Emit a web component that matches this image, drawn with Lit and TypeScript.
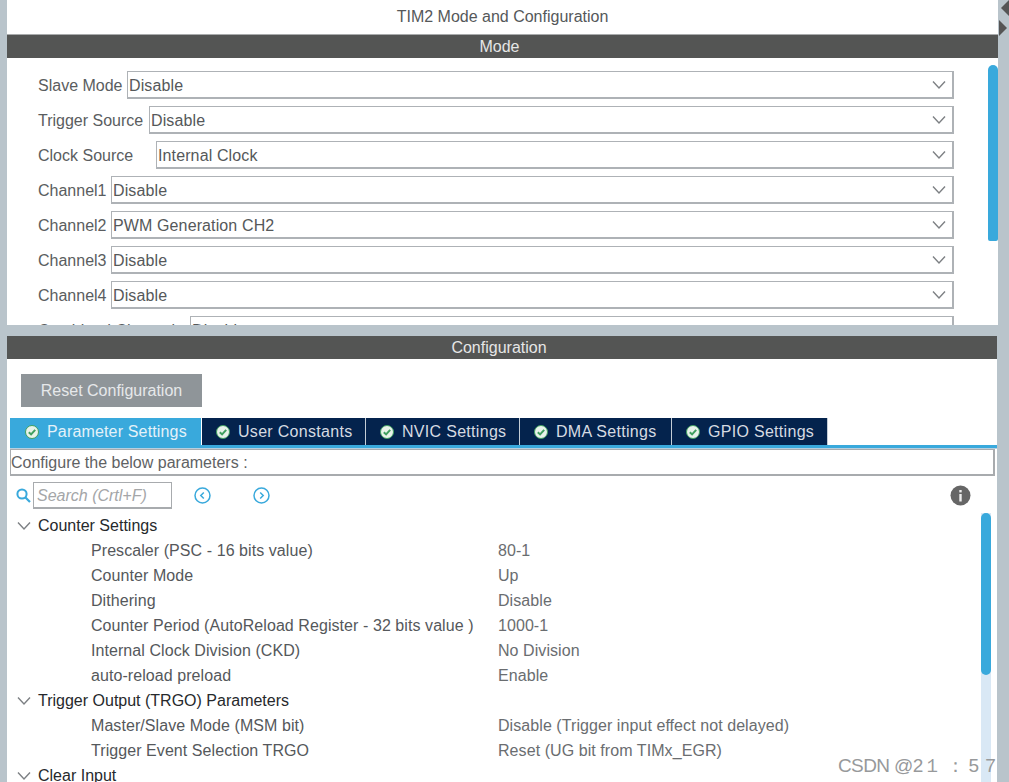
import { LitElement, html, css, svg } from "lit";
import { customElement } from "lit/decorators.js";

const modes = [
  ["Slave Mode", "Disable", 89],
  ["Trigger Source", "Disable", 111],
  ["Clock Source", "Internal Clock", 118],
  ["Channel1", "Disable", 73],
  ["Channel2", "PWM Generation CH2", 73],
  ["Channel3", "Disable", 73],
  ["Channel4", "Disable", 73],
  ["Combined Channels", "Disable", 152],
] as const;
const tabs = [
  ["Parameter Settings", 192],
  ["User Constants", 164],
  ["NVIC Settings", 154],
  ["DMA Settings", 152],
  ["GPIO Settings", 156],
] as const;
type Row = { h?: string; k?: string; v?: string };
const rows: Row[] = [
  { h: "Counter Settings" },
  { k: "Prescaler (PSC - 16 bits value)", v: "80-1" },
  { k: "Counter Mode", v: "Up" },
  { k: "Dithering", v: "Disable" },
  { k: "Counter Period (AutoReload Register - 32 bits value )", v: "1000-1" },
  { k: "Internal Clock Division (CKD)", v: "No Division" },
  { k: "auto-reload preload", v: "Enable" },
  { h: "Trigger Output (TRGO) Parameters" },
  { k: "Master/Slave Mode (MSM bit)", v: "Disable (Trigger input effect not delayed)" },
  { k: "Trigger Event Selection TRGO", v: "Reset (UG bit from TIMx_EGR)" },
  { h: "Clear Input" },
];
const chevron = svg`<path d="M1 1.5 L7 8 L13 1.5" fill="none" stroke="#7d8084" stroke-width="1.4"/>`;
const check = html`<svg class="check" width="14" height="14" viewBox="0 0 14 14">
  <circle cx="7" cy="7" r="6.5" fill="#e8f3ea" stroke="#3f9f5f" stroke-width="1"/>
  <path d="M3.8 7.2 L6.1 9.4 L10.2 4.9" fill="none" stroke="#3f9f5f" stroke-width="2"/>
</svg>`;

@customElement("app-root")
export class AppRoot extends LitElement {
  static styles = css`
    :host {
      display: flex;
      width: 1009px;
      height: 782px;
      overflow: hidden;
      position: relative;
      background: #b9c4cb;
      font-family: "Liberation Sans", Arial, sans-serif;
      font-size: 16px;
      color: #5a5d60;
    }
    .main { width: 991px; margin-left: 7px; display: flex; flex-direction: column; }
    .gutter { flex: 1; display: flex; flex-direction: column; gap: 4px; padding-left: 1px; }
    .gutter svg { display: block; }
    .top { height: 325px; background: #fff; display: flex; flex-direction: column; }
    .title { height: 34px; line-height: 33px; text-align: center; color: #55585a; }
    .bar {
      height: 23px; line-height: 23px; text-align: center; background: #545554;
      color: #e6e6e6; flex: none; padding-right: 6px;
    }
    .top .bar { border-top: 1px solid #a9abac; }
    .modebody { flex: 1; min-height: 0; display: flex; overflow: hidden; }
    .modelist {
      flex: 1; padding: 13px 0 0 31px; display: flex; flex-direction: column; gap: 7px;
      align-items: stretch; margin-right: 34px;
    }
    .mrow { display: flex; flex: none; height: 28px; align-items: center; }
    .mlabel { flex: none; white-space: nowrap; padding-top: 1px; }
    .select {
      flex: 1; height: 28px; box-sizing: border-box; border: 2px solid #aeb2b6; border-top-width: 1px;
      border-left-width: 1px; display: flex; align-items: center; justify-content: space-between;
      padding: 2px 6px 0 1px; color: #55585a; letter-spacing: .12px;
    }
    .select svg { display: block; margin-top: -2px; }
    .vscroll { width: 10px; flex: none; }
    .thumb { background: #39a9dc; width: 10px; border-radius: 5px 5px 2px 2px; }
    .vscroll .thumb { margin-top: 7px; height: 176px; }
    .bottom { flex: 1; min-height: 0; margin-top: 11px; margin-right: 1px; background: #fff; display: flex; flex-direction: column; overflow: hidden; }
    .resetwrap { padding: 15px 0 11px 14px; }
    .reset {
      width: 181px; height: 33px; box-sizing: border-box; background: #8f9599; color: #e6e8ea;
      display: flex; align-items: center; justify-content: center;
    }
    .tabs { display: flex; margin-left: 3px; height: 27px; border-bottom: 3px solid #39a9dc; box-shadow: 0 1px 0 #b6cfdf; }
    .tab {
      flex: none; background: #04234d; color: #d6dbe2; border-right: 1px solid #c4cdd6;
      box-sizing: border-box; display: flex; align-items: center; gap: 8px; padding-left: 14px;
      letter-spacing: .3px; white-space: nowrap;
    }
    .tab.active { background: #39a9dc; color: #e4f2f9; letter-spacing: .16px; padding-left: 15px; border-right-color: #fff; }
    .confbox {
      margin: 1px 2px 0 3px; height: 27px; box-sizing: border-box; border: 2px solid #a8abae;
      border-top-width: 1px; border-left-width: 1px; line-height: 26px; color: #5f6264;
    }
    .toolbar { height: 37px; display: flex; align-items: center; padding: 1px 0 0 9px; box-sizing: border-box; }
    .search {
      width: 139px; height: 27px; box-sizing: border-box; border: 1px solid #a8abae; border-bottom-width: 2px;
      margin-left: 2px; font-style: italic; color: #a4a6a8; line-height: 26px; padding-left: 3px;
    }
    .nav1 { margin-left: 22px; }
    .nav2 { margin-left: 42px; }
    .info { margin-left: auto; margin-right: 26px; }
    .treewrap { flex: 1; min-height: 0; display: flex; }
    .tree { flex: 1; overflow: hidden; }
    .trow { height: 25px; display: grid; grid-template-columns: 84px 407px 1fr; align-items: center; white-space: nowrap; }
    .head { grid-column: 1 / 4; display: flex; align-items: center; gap: 7px; padding-left: 10px; color: #26292c; }
    .key { grid-column: 2; color: #55585b; letter-spacing: .07px; }
    .val { grid-column: 3; color: #6a6d70; letter-spacing: .07px; }
    .track { width: 10px; flex: none; background: #d9e8f5; margin-right: 6px; }
    .track .thumb { height: 162px; border-radius: 5px; }
    .mark {
      position: absolute; left: 838px; top: 753px; font-size: 19px; color: #97999b;
      white-space: nowrap; letter-spacing: -.6px;
    }
    .mark .colon { margin-left: 5px; margin-right: 4px; }
    .mark .last { margin-left: 2px; }
  `;

  render() {
    return html`
      <div class="main">
        <div class="top">
          <div class="title">TIM2 Mode and Configuration</div>
          <div class="bar">Mode</div>
          <div class="modebody">
            <div class="modelist">
              ${modes.map(
                ([l, v, w]) => html`<div class="mrow">
                  <div class="mlabel" style="width:${w}px">${l}</div>
                  <div class="select">
                    <span>${v}</span>
                    <svg width="14" height="10" viewBox="0 0 14 10">${chevron}</svg>
                  </div>
                </div>`
              )}
            </div>
            <div class="vscroll"><div class="thumb"></div></div>
          </div>
        </div>
        <div class="bottom">
          <div class="bar">Configuration</div>
          <div class="resetwrap"><div class="reset">Reset Configuration</div></div>
          <div class="tabs">
            ${tabs.map(
              ([t, w], i) => html`<div class="tab ${i === 0 ? "active" : ""}" style="width:${w}px">${check}<span>${t}</span></div>`
            )}
          </div>
          <div class="confbox">Configure the below parameters :</div>
          <div class="toolbar">
            <svg width="15" height="15" viewBox="0 0 15 15">
              <circle cx="6" cy="6" r="4.6" fill="none" stroke="#39a9dc" stroke-width="2"/>
              <path d="M9.5 9.5 L14 14" stroke="#39a9dc" stroke-width="2.2"/>
            </svg>
            <div class="search">Search (Crtl+F)</div>
            <svg class="nav1" width="17" height="17" viewBox="0 0 17 17">
              <circle cx="8.5" cy="8.5" r="7.5" fill="none" stroke="#39a9dc" stroke-width="1.5"/>
              <path d="M9.8 5.5 L6.8 8.5 L9.8 11.5" fill="none" stroke="#39a9dc" stroke-width="1.5"/>
            </svg>
            <svg class="nav2" width="17" height="17" viewBox="0 0 17 17">
              <circle cx="8.5" cy="8.5" r="7.5" fill="none" stroke="#39a9dc" stroke-width="1.5"/>
              <path d="M7.2 5.5 L10.2 8.5 L7.2 11.5" fill="none" stroke="#39a9dc" stroke-width="1.5"/>
            </svg>
            <svg class="info" width="21" height="21" viewBox="0 0 21 21">
              <circle cx="10.5" cy="10.5" r="10" fill="#666"/>
              <rect x="9.3" y="9" width="2.4" height="7.5" fill="#eee"/>
              <rect x="9.3" y="5" width="2.4" height="2.4" fill="#eee"/>
            </svg>
          </div>
          <div class="treewrap">
            <div class="tree">
              ${rows.map((r) =>
                r.h
                  ? html`<div class="trow"><div class="head">
                      <svg width="14" height="10" viewBox="0 0 14 10">${chevron}</svg><span>${r.h}</span>
                    </div></div>`
                  : html`<div class="trow"><div class="key">${r.k}</div><div class="val">${r.v}</div></div>`
              )}
            </div>
            <div class="track"><div class="thumb"></div></div>
          </div>
        </div>
      </div>
      <div class="gutter">
        <svg width="10" height="16" viewBox="0 0 10 16"><path d="M10 0 L10 16 L2 8 Z" fill="#555"/></svg>
        <svg width="10" height="16" viewBox="0 0 10 16"><path d="M0 0 L0 16 L8 8 Z" fill="#555"/></svg>
      </div>
      <div class="mark">CSDN @2１<span class="colon">：</span>5 <span class="last">7</span></div>
    `;
  }
}
